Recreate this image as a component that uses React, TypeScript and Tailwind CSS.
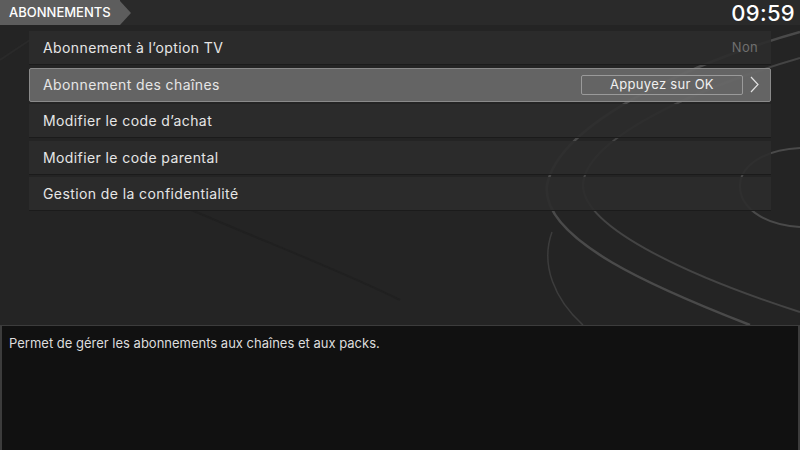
const rows = [
    { label: "Abonnement à l’option TV", value: 'Non' },
    { label: 'Abonnement des chaînes', action: 'Appuyez sur OK', selected: true },
    { label: "Modifier le code d’achat" },
    { label: 'Modifier le code parental' },
    { label: 'Gestion de la confidentialité' },
];

const Background = () => (
    <svg className="absolute inset-0" width="800" height="300" viewBox="0 25 800 300" fill="none">
        <path d="M 0 60 L 30 40" stroke="#2a2a2a" strokeWidth="2" />
        <path d="M 180 205 C 260 240, 340 270, 400 300" stroke="#202020" strokeWidth="2" />
        <path d="M 800 32 C 700 60, 560 120, 547 185 C 540 240, 660 290, 750 325" stroke="#4a4a4a" strokeWidth="2.5" />
        <path d="M 800 58 C 690 90, 585 140, 583 185 C 583 230, 700 280, 800 312" stroke="#444444" strokeWidth="2" />
        <path d="M 800 148 C 760 150, 740 168, 740 186 C 740 206, 760 224, 800 227" stroke="#4a4a4a" strokeWidth="2" />
        <path d="M 552 232 C 540 265, 555 300, 583 325" stroke="#3c3c3c" strokeWidth="1.5" />
    </svg>
);

const App = () => {
    return (
        <div className="w-[800px] h-[450px] flex flex-col bg-[#232323] overflow-hidden" style={{ fontFamily: 'Inter, "Open Sans", sans-serif' }}>
            <div className="h-[25px] shrink-0 flex items-center justify-between bg-[#2a2a2a]">
                <div className="relative h-full flex items-center">
                    <div className="h-full flex items-center pl-[9px] pr-[9px] bg-[#5d5d5d] text-white text-[13px] font-medium tracking-[0px]">
                        ABONNEMENTS
                    </div>
                    <div className="h-0 w-0 border-y-[12.5px] border-y-transparent border-l-[11px] border-l-[#5d5d5d]"></div>
                </div>
                <div className="pr-[5px] text-white text-[22px] leading-none font-medium tracking-[0.3px]">09:59</div>
            </div>

            <div className="relative flex-1 bg-[#242424]">
                <Background />
                <div className="relative flex flex-col gap-[2.5px] pt-[6px] pl-[29px] pr-[29px]">
                    {rows.map((row) => (
                        <div
                            key={row.label}
                            className={
                                row.selected
                                    ? 'h-[34px] flex items-center justify-between pl-[13px] pr-[13px] rounded-[2px] bg-[#686868]/95 border border-[#8a8a8a]'
                                    : 'h-[34px] flex items-center justify-between pl-[14px] pr-[13px] bg-[#2c2c2c]/90 border-b border-[#1b1b1b]'
                            }
                        >
                            <span className="text-[14px] text-[#e6e6e6] tracking-[0.4px]">{row.label}</span>
                            {row.value && <span className="text-[13px] text-[#6f6f6f] tracking-[0.3px]">{row.value}</span>}
                            {row.action && (
                                <div className="flex items-center gap-[7px] -mr-[2px]">
                                    <div className="w-[162px] h-[20px] flex items-center justify-center border border-[#9a9a9a] rounded-[2px] text-[13px] text-[#f0f0f0] tracking-[0.3px]">
                                        {row.action}
                                    </div>
                                    <svg width="9" height="17" viewBox="0 0 9 17" fill="none">
                                        <path d="M 1 1 L 8 8.5 L 1 16" stroke="#e0e0e0" strokeWidth="1.2" />
                                    </svg>
                                </div>
                            )}
                        </div>
                    ))}
                </div>
            </div>

            <div className="h-[125px] shrink-0 bg-[#111111] border-t border-x-2 border-[#3c3c3c] px-[7px] pt-[8px]">
                <p className="text-[13px] text-[#dddddd]">Permet de gérer les abonnements aux chaînes et aux packs.</p>
            </div>
        </div>
    );
};

export default App;
